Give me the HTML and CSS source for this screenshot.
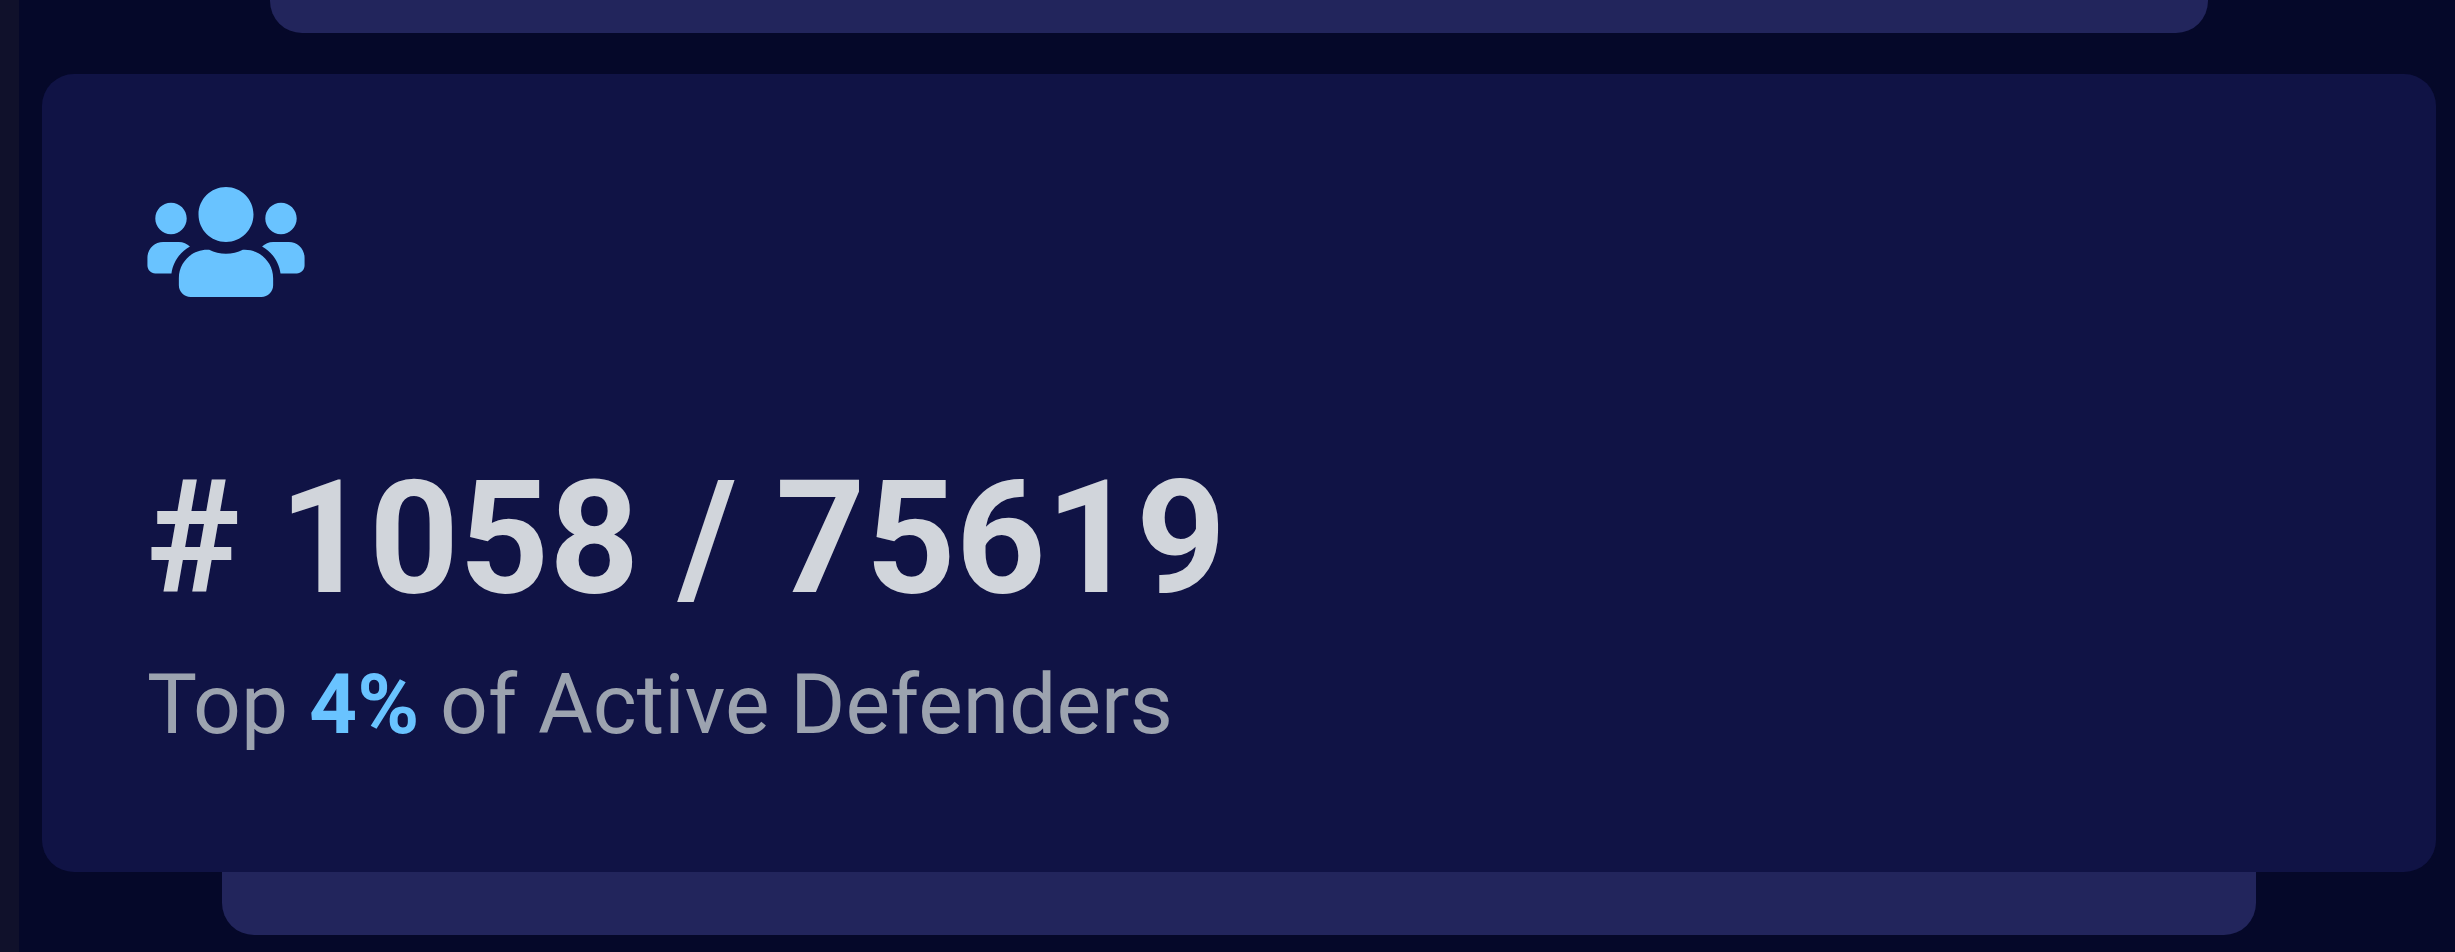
FILE: index.html
```html
<!DOCTYPE html>
<html lang="en">
<head>
<meta charset="utf-8">
<title>Defender rank</title>
<link rel="stylesheet" href="styles.css">
</head>
<body>
<div class="page">
<div class="rail"></div>
<main class="stack">
<div class="tab tab-top"></div>
<section class="card">
<svg class="icon" viewBox="0 0 640 448" aria-hidden="true"><path d="M96 192c35.300 0 64-28.700 64-64s-28.700-64-64-64-64 28.700-64 64 28.700 64 64 64zm448 0c35.300 0 64-28.700 64-64s-28.700-64-64-64-64 28.700-64 64 28.700 64 64 64zm32 32h-64c-17.600 0-33.500 7.100-45.100 18.600 40.300 22.100 68.900 62 75.100 109.400h66c17.700 0 32-14.300 32-32v-32c0-35.300-28.700-64-64-64zm-256 0c61.900 0 112-50.100 112-112S381.900 0 320 0 208 50.100 208 112s50.100 112 112 112zm76.800 32h-8.300c-20.800 10-43.900 16-68.500 16s-47.600-6-68.500-16h-8.300C179.600 256 128 307.600 128 371.200V400c0 26.500 21.500 48 48 48h288c26.500 0 48-21.500 48-48v-28.800c0-63.600-51.600-115.200-115.200-115.200zm-223.700-13.400C161.500 231.100 145.600 224 128 224H64c-35.300 0-64 28.700-64 64v32c0 17.700 14.300 32 32 32h65.900c6.300-47.400 34.900-87.300 75.200-109.400z"/></svg>
<h1 class="rank"># 1058 / 75619</h1>
<p class="note">Top <strong class="percent">4%</strong> of Active Defenders</p>
</section>
<div class="tab tab-bottom"></div>
</main>
</div>
</body>
</html>
```
FILE: styles.css
```css
body {
  margin: 0;
  background: #050829;
  font-family: Roboto, sans-serif;
}
.page {
  display: flex;
  min-height: 100vh;
}
.rail {
  width: 19px;
  background: #10112b;
}
.stack {
  flex: 1;
  padding: 0 19px 0 23px;
}
.tab {
  background: #22255c;
}
.tab-top {
  height: 33px;
  margin: 0 228px 41px;
  border-radius: 0 0 32px 32px;
}
.card {
  padding: 113px 105px 112px;
  border-radius: 32px;
  background: #101345;
}
.icon {
  display: block;
  width: 158px;
  height: 110px;
  fill: #69c3ff;
}
.rank {
  margin: 161px 0 0;
  color: #d1d5db;
  font-size: 157px;
  line-height: 160px;
  font-weight: 700;
}
.note {
  margin: 32px 0 0;
  color: #9ca3af;
  font-size: 84px;
  line-height: 110px;
}
.percent {
  color: #69c3ff;
  font-weight: 700;
}
.tab-bottom {
  height: 63px;
  margin: 0 180px;
  border-radius: 0 0 32px 32px;
}
```
